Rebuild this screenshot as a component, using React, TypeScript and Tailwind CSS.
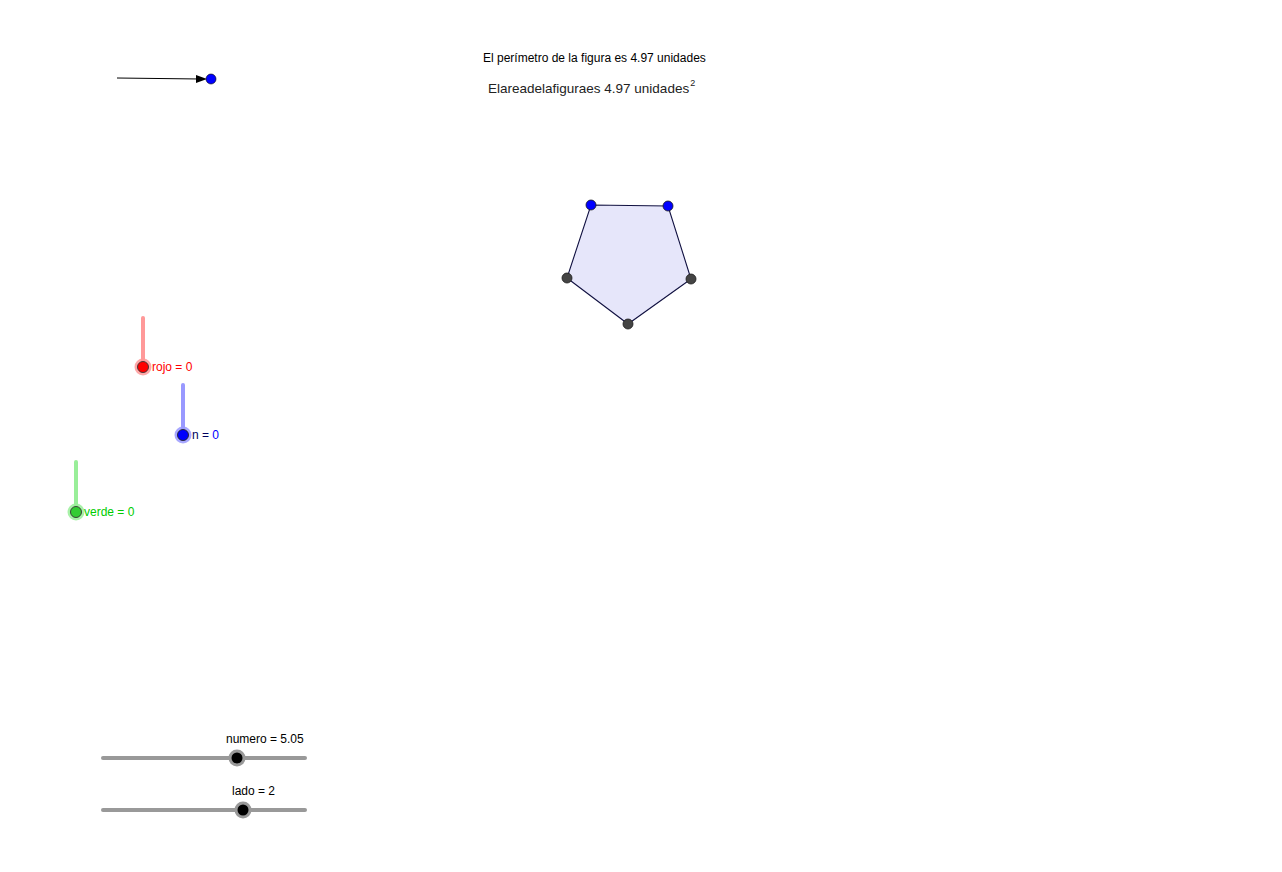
import React from "react";

export default function App() {
  const pent = [
    [591, 205],
    [668, 206],
    [691, 279],
    [628, 324],
    [567, 278],
  ];
  return (
    <div className="relative w-[1282px] h-[872px] bg-white overflow-hidden font-['Liberation_Sans',Arial,sans-serif]">
      <svg className="absolute inset-0" width="1282" height="872" viewBox="0 0 1282 872">
        {/* arrow */}
        <line x1="117" y1="78" x2="200" y2="79" stroke="#000" strokeWidth="1" />
        <polygon points="196,75 207,79 196,83" fill="#000" />
        <circle cx="211" cy="79" r="5" fill="#0000ff" stroke="#000" strokeWidth="0.6" />

        {/* pentagon */}
        <polygon
          points={pent.map((p) => p.join(",")).join(" ")}
          fill="#e6e6fa"
          stroke="#101040"
          strokeWidth="1.1"
        />
        {pent.map(([x, y], i) => (
          <circle
            key={i}
            cx={x}
            cy={y}
            r="5"
            fill={i < 2 ? "#0000ff" : "#444444"}
            stroke="#1a1a1a"
            strokeWidth="0.8"
          />
        ))}

        {/* rojo slider */}
        <line x1="143" y1="318" x2="143" y2="367" stroke="#ff9999" strokeWidth="4" strokeLinecap="round" />
        <circle cx="143" cy="367" r="8.5" fill="#ff9999" opacity="0.85" />
        <circle cx="143" cy="367" r="5.5" fill="#ff0000" stroke="#333" strokeWidth="0.9" />

        {/* n slider */}
        <line x1="183" y1="385" x2="183" y2="435" stroke="#9999ff" strokeWidth="4" strokeLinecap="round" />
        <circle cx="183" cy="435" r="8.5" fill="#9999ff" opacity="0.85" />
        <circle cx="183" cy="435" r="5.5" fill="#0000ff" stroke="#222" strokeWidth="0.9" />

        {/* verde slider */}
        <line x1="76" y1="462" x2="76" y2="512" stroke="#99ee99" strokeWidth="4" strokeLinecap="round" />
        <circle cx="76" cy="512" r="8.5" fill="#99ee99" opacity="0.85" />
        <circle cx="76" cy="512" r="5.5" fill="#33cc33" stroke="#333" strokeWidth="0.9" />

        {/* numero slider */}
        <line x1="103" y1="758" x2="305" y2="758" stroke="#999999" strokeWidth="4" strokeLinecap="round" />
        <circle cx="237" cy="758" r="8.5" fill="#999999" />
        <circle cx="237" cy="758" r="5.5" fill="#000000" />

        {/* lado slider */}
        <line x1="103" y1="810" x2="305" y2="810" stroke="#999999" strokeWidth="4" strokeLinecap="round" />
        <circle cx="243" cy="810" r="8.5" fill="#999999" />
        <circle cx="243" cy="810" r="5.5" fill="#000000" />
      </svg>

      <div className="absolute left-[483px] top-[52px] text-[12px] leading-[13px] text-black whitespace-nowrap">
        El perímetro de la figura es 4.97 unidades
      </div>
      <div className="absolute left-[488px] top-[81px] flex items-start text-[13.5px] leading-[15px] text-[#222] whitespace-nowrap">
        <span>Elareadelafiguraes 4.97 unidades</span>
        <span className="text-[9px] leading-[9px] -mt-[2px] ml-[1px]">2</span>
      </div>

      <div className="absolute left-[152px] top-[361px] text-[12px] leading-[13px] text-[#ff0000] whitespace-nowrap">
        rojo = 0
      </div>
      <div className="absolute left-[192px] top-[429px] text-[12px] leading-[13px] whitespace-nowrap">
        <span className="text-[#000060]">n = </span>
        <span className="text-[#0000ff]">0</span>
      </div>
      <div className="absolute left-[84px] top-[506px] text-[12px] leading-[13px] text-[#00cc00] whitespace-nowrap">
        verde = 0
      </div>

      <div className="absolute left-[226px] top-[733px] text-[12px] leading-[13px] text-black whitespace-nowrap">
        numero = 5.05
      </div>
      <div className="absolute left-[232px] top-[785px] text-[12px] leading-[13px] text-black whitespace-nowrap">
        lado = 2
      </div>
    </div>
  );
}
